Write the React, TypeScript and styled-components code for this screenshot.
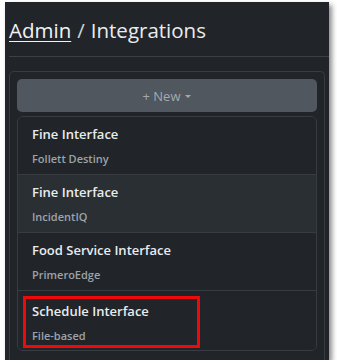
import React from "react";
import styled, { createGlobalStyle } from "styled-components";

const Global = createGlobalStyle`
  html, body { margin: 0; padding: 0; background: #ffffff; }
  body { font-family: "Open Sans", "Noto Sans", Arial, sans-serif; }
`;

const Panel = styled.div`
  margin: 2px 0 0 5px;
  width: 324px;
  height: 358px;
  background: #212529;
  box-shadow: 3px 3px 5px rgba(0, 0, 0, 0.45);
  overflow: hidden;
  display: flex;
  flex-direction: column;
`;

const Header = styled.div`
  height: 55px;
  display: flex;
  align-items: center;
  border-bottom: 1px solid #3b4046;
  margin-left: 4px;
  padding-top: 2px;
  box-sizing: border-box;
  font-size: 20.5px;
  color: #e9ecef;
`;

const Crumb = styled.a`
  color: #f1f3f5;
  text-decoration: underline;
  text-underline-offset: 3px;
  text-decoration-thickness: 1px;
`;

const Sep = styled.span`
  margin: 0 6px;
  color: #ced4da;
`;

const Card = styled.div`
  margin: 14px 4px 0 4px;
  flex: 1;
  border: 1px solid #373c41;
  border-bottom: none;
  border-radius: 5px 5px 0 0;
  padding: 7px 7px 0 7px;
  display: flex;
  flex-direction: column;
  gap: 4px;
`;

const NewButton = styled.button`
  height: 33px;
  border: none;
  border-radius: 5px;
  background: #50575e;
  color: #a3a9af;
  font-family: "Open Sans", "Noto Sans", Arial, sans-serif;
  font-size: 13px;
  display: flex;
  align-items: center;
  justify-content: center;
  gap: 4px;
`;

const Caret = styled.span`
  display: inline-block;
  width: 0;
  height: 0;
  border-left: 3px solid transparent;
  border-right: 3px solid transparent;
  border-top: 3px solid #a3a9af;
  margin-left: 1px;
  margin-top: 1px;
`;

const List = styled.div`
  border: 1px solid #373c41;
  border-radius: 6px;
  overflow: hidden;
  display: flex;
  flex-direction: column;
`;

const Item = styled.div<{ $hover?: boolean; $last?: boolean }>`
  height: ${(p) => (p.$last ? "59px" : "58px")};
  box-sizing: border-box;
  padding: ${(p) => (p.$last ? "5px 14px 2px" : "0 14px")};
  background: ${(p) => (p.$hover ? "#2a2f34" : "#212529")};
  border-bottom: ${(p) => (p.$last ? "none" : "1px solid #373c41")};
  display: flex;
  flex-direction: column;
  justify-content: center;
`;

const Highlight = styled.div`
  margin-left: -9px;
  margin-right: auto;
  width: 177px;
  box-sizing: border-box;
  border: 3px solid #ee0a0a;
  padding: 0 6px;
  height: 52px;
  display: flex;
  flex-direction: column;
  justify-content: center;
`;

const Title = styled.div`
  font-size: 13px;
  font-weight: 600;
  color: #e9ecef;
  line-height: 18px;
`;

const Sub = styled.div`
  margin-top: 9px;
  font-size: 11px;
  font-weight: 600;
  color: #9ca3aa;
  line-height: 14px;
`;

const items = [
  { title: "Fine Interface", sub: "Follett Destiny" },
  { title: "Fine Interface", sub: "IncidentIQ", hover: true },
  { title: "Food Service Interface", sub: "PrimeroEdge" },
];

export default function App() {
  return (
    <>
      <Global />
      <Panel>
        <Header>
          <Crumb>Admin</Crumb>
          <Sep>/</Sep>
          <span>Integrations</span>
        </Header>
        <Card>
          <NewButton>
            + New <Caret />
          </NewButton>
          <List>
            {items.map((it, i) => (
              <Item key={i} $hover={it.hover}>
                <Title>{it.title}</Title>
                <Sub>{it.sub}</Sub>
              </Item>
            ))}
            <Item $last>
              <Highlight>
                <Title>Schedule Interface</Title>
                <Sub>File-based</Sub>
              </Highlight>
            </Item>
          </List>
        </Card>
      </Panel>
    </>
  );
}
